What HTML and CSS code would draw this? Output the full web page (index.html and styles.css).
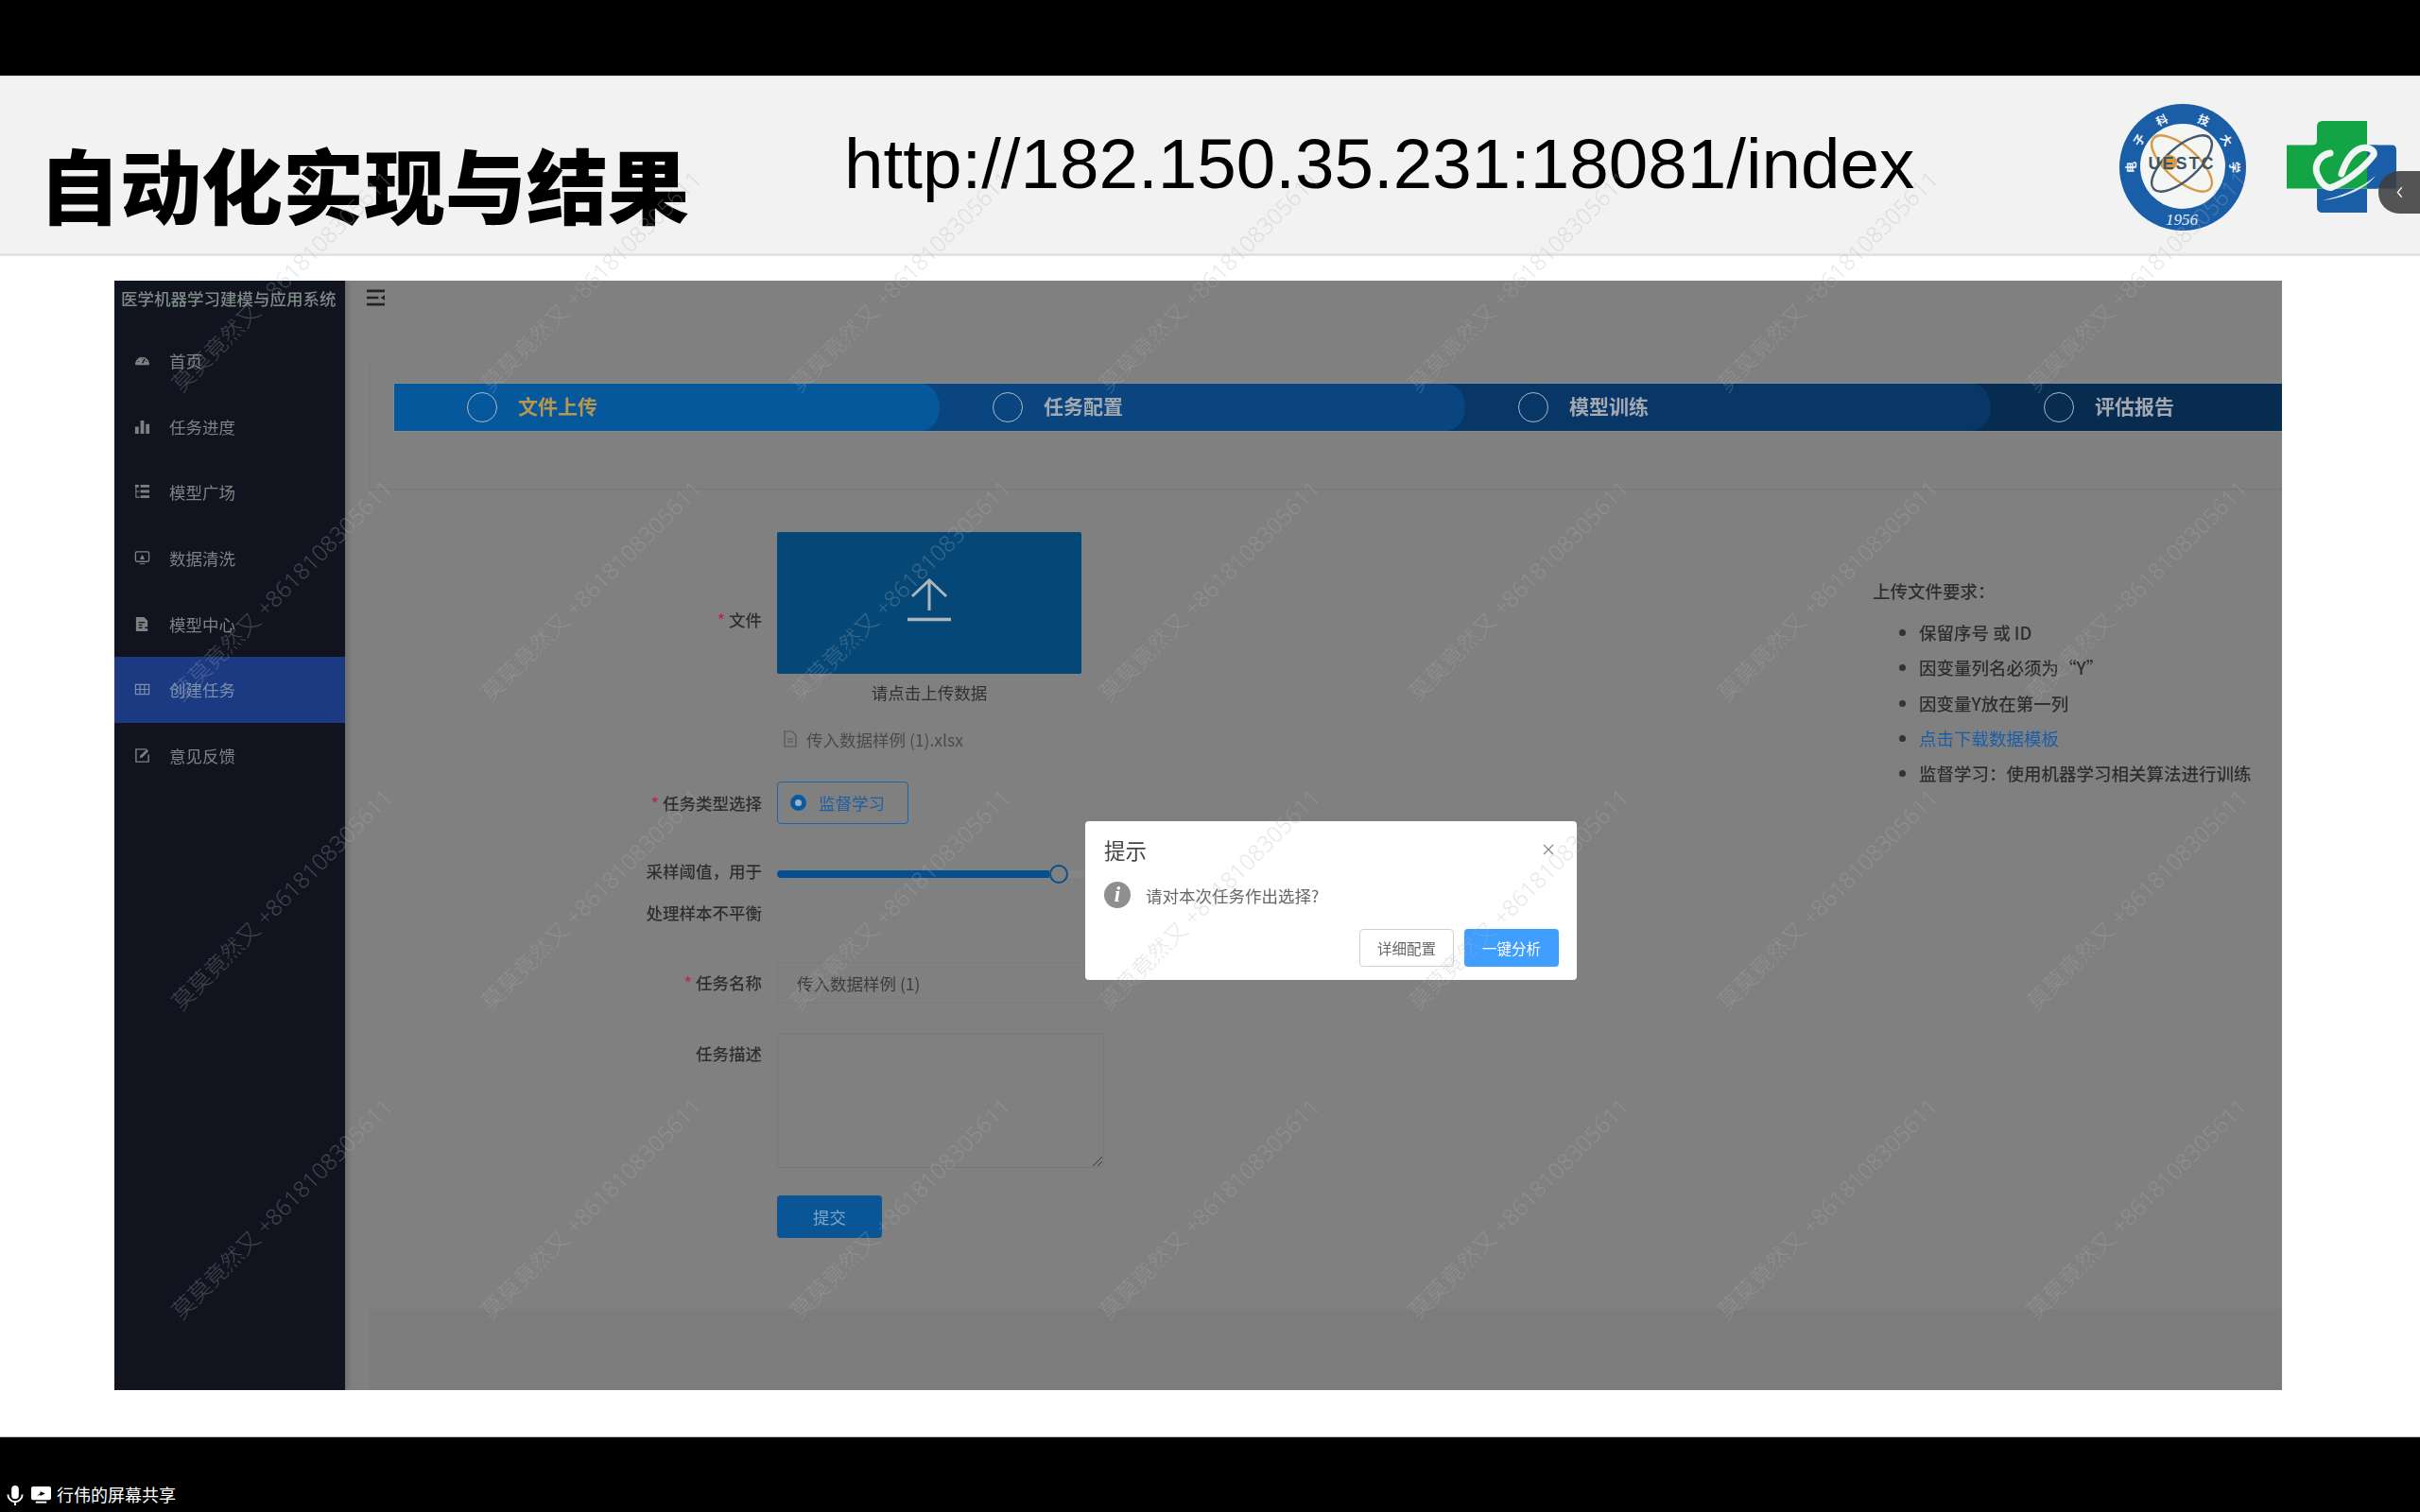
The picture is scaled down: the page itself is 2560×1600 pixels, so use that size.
FILE: index.html
```html
<!DOCTYPE html>
<html lang="zh-CN">
  <head>
    <meta charset="UTF-8" />
    <title>自动化实现与结果</title>
    <link rel="stylesheet" href="styles.css">
  </head>
  <body>
    <div class="black-bar"></div>

    <header class="slide-head">
      <h1 class="slide-title">自动化实现与结果</h1>
      <div class="slide-url">http://182.150.35.231:18081/index</div>
      <svg class="logo-seal" viewBox="0 0 136 136">
        <circle cx="68" cy="68" r="67" fill="#1a5ea8" />
        <circle cx="68" cy="67" r="45" fill="#f4f6f4" />
        <g fill="none" stroke-width="2.4">
          <ellipse cx="67" cy="64" rx="40" ry="17" transform="rotate(42 67 64)" stroke="#d99a45" />
          <ellipse cx="67" cy="64" rx="40" ry="17" transform="rotate(-42 67 64)" stroke="#46586a" />
        </g>
        <circle cx="54" cy="63" r="8" fill="#d99a45" />
        <text class="seal-name" x="67" y="69.5">UESTC</text>
        <text class="seal-year" x="67" y="129">1956</text>
        <g class="seal-ring">
          <text transform="translate(18 68) rotate(-90)">电</text>
          <text transform="translate(25.6 41.5) rotate(-58)">子</text>
          <text transform="translate(47.7 22.3) rotate(-24)">科</text>
          <text transform="translate(88.3 22.3) rotate(24)">技</text>
          <text transform="translate(110.4 41.5) rotate(58)">大</text>
          <text transform="translate(118 68) rotate(90)">学</text>
        </g>
      </svg>
      <svg class="logo-cross" viewBox="0 0 116 97">
        <path d="M85 25.6H111Q116 25.6 116 31V71.6H85V97H38Q32 97 32 91V71.6H85Z" fill="#1a5ea8" />
        <path d="M38 0H85V71.6H32V71.6H0V25.6H27Q32 25.6 32 21V6Q32 0 38 0Z" fill="#12a445" />
        <path d="M85 25.6H96V71.6H85Z" fill="#1a5ea8" />
        <path d="M46 34C34 36 28 48 33 58C37 68 44 72 48 70C60 66 80 52 92 36C94 30 84 26 76 30C68 34 62 44 58 56" fill="none" stroke="#f2f6f2" stroke-width="7" stroke-linecap="round" />
        <path d="M38 84C56 80 78 72 94 58C84 72 60 82 38 84Z" fill="#dfe9f2" />
      </svg>
      <div class="side-handle">
        <svg viewBox="0 0 12 20"><path d="M9 3L3 10L9 17" fill="none" stroke="#fff" stroke-width="1.6" /></svg>
      </div>
    </header>

    <main class="slide-body">
      <div class="app">
        <aside class="sidebar">
          <div class="brand">医学机器学习建模与应用系统</div>
          <nav class="menu">
            <a class="menu-item">
              <svg viewBox="0 0 18 18"><path d="M1 13A8 8 0 1 1 17 13Q17 14 16 14H2Q1 14 1 13Z" fill="currentColor" /><path d="M9 12L12 7M4 10H5M13 10H14M9 6V7" stroke="#11141f" stroke-width="1.4" /></svg>
              <span>首页</span>
            </a>
            <a class="menu-item">
              <svg viewBox="0 0 18 18"><path d="M1 9H5V17H1ZM7 2H11V17H7ZM13 6H17V17H13Z" fill="currentColor" /></svg>
              <span>任务进度</span>
            </a>
            <a class="menu-item">
              <svg viewBox="0 0 18 18"><path d="M1 1H5V4H1ZM7 1H17V4H7ZM7 7H17V10H7ZM7 13H17V16H7Z" fill="currentColor" /><path d="M2 4V15H6M2 8.5H6" fill="none" stroke="currentColor" stroke-width="1.2" /></svg>
              <span>模型广场</span>
            </a>
            <a class="menu-item">
              <svg viewBox="0 0 18 18"><rect x="1.5" y="2" width="15" height="11" rx="1.5" fill="none" stroke="currentColor" stroke-width="1.4" /><path d="M6 15.5H12M7 10L9 6L11 10Z" fill="currentColor" stroke="currentColor" /></svg>
              <span>数据清洗</span>
            </a>
            <a class="menu-item">
              <svg viewBox="0 0 18 18"><path d="M2 1H11L15 5V17H2Z" fill="currentColor" /><path d="M5 7H12M5 10H9M12 13H17M5 13H9" stroke="#11141f" stroke-width="1.4" /></svg>
              <span>模型中心</span>
            </a>
            <a class="menu-item active">
              <svg viewBox="0 0 18 18"><path d="M1.5 3.5H16.5V14.5H1.5ZM1.5 9H16.5M6.5 3.5V14.5M11.5 3.5V14.5" fill="none" stroke="currentColor" stroke-width="1.3" /></svg>
              <span>创建任务</span>
            </a>
            <a class="menu-item">
              <svg viewBox="0 0 18 18"><path d="M14 2H2V16H16V8" fill="none" stroke="currentColor" stroke-width="1.5" /><path d="M6 12L7 9L14 2L16 4L9 11Z" fill="currentColor" /></svg>
              <span>意见反馈</span>
            </a>
          </nav>
        </aside>

        <section class="main">
          <div class="main-top">
            <svg class="fold-icon" viewBox="0 0 20 18"><path d="M0 1.5H20M0 9H13M0 16.5H20" stroke="#222" stroke-width="2.8" /><path d="M20 6V12L15.5 9Z" fill="#222" /></svg>
          </div>

          <div class="steps-card">
            <div class="steps">
              <div class="step step-1"><i></i><span>文件上传</span></div>
              <div class="step step-2"><i></i><span>任务配置</span></div>
              <div class="step step-3"><i></i><span>模型训练</span></div>
              <div class="step step-4"><i></i><span>评估报告</span></div>
            </div>
          </div>

          <div class="content">
            <form class="task-form">
              <div class="form-row row-upload">
                <label class="required">文件</label>
                <div class="upload-wrap">
                  <div class="upload-box">
                    <svg viewBox="0 0 48 46"><path d="M24 2V34M6 19L24 2L42 19" fill="none" stroke="#aeb6bb" stroke-width="3" /><path d="M1 43.5H47" stroke="#aeb6bb" stroke-width="3.4" /></svg>
                  </div>
                  <div class="upload-tip">请点击上传数据</div>
                </div>
              </div>
              <div class="form-row row-file">
                <span></span>
                <div class="file-item">
                  <svg viewBox="0 0 14 18"><path d="M1 1H9L13 5V17H1ZM4 9H10M4 12H10" fill="none" stroke="#555" stroke-width="1.2" /></svg>
                  <span>传入数据样例 (1).xlsx</span>
                </div>
              </div>
              <div class="form-row row-radio">
                <label class="required">任务类型选择</label>
                <div class="radio-btn"><i></i><span>监督学习</span></div>
              </div>
              <div class="form-row row-slider">
                <label>采样阈值，用于<br />处理样本不平衡</label>
                <div class="slider">
                  <div class="slider-fill"></div>
                  <div class="slider-thumb"></div>
                </div>
              </div>
              <div class="form-row row-name">
                <label class="required">任务名称</label>
                <div class="text-input">传入数据样例 (1)</div>
              </div>
              <div class="form-row row-desc">
                <label>任务描述</label>
                <div class="text-area">
                  <svg viewBox="0 0 12 12"><path d="M1 11L11 1M6 11L11 6" stroke="#333" stroke-width="1" /></svg>
                </div>
              </div>
              <div class="form-row row-submit">
                <span></span>
                <button type="button" class="submit-btn">提交</button>
              </div>
            </form>

            <div class="rules">
              <p>上传文件要求：</p>
              <ul>
                <li>保留序号 或 ID</li>
                <li>因变量列名必须为“Y”</li>
                <li>因变量Y放在第一列</li>
                <li><a>点击下载数据模板</a></li>
                <li>监督学习：使用机器学习相关算法进行训练</li>
              </ul>
            </div>
          </div>
          <div class="bottom-shade"></div>
        </section>

        <div class="dialog">
          <div class="dialog-head">
            <span>提示</span>
            <svg viewBox="0 0 12 12"><path d="M1 1L11 11M11 1L1 11" stroke="#8c8c8c" stroke-width="1.4" /></svg>
          </div>
          <div class="dialog-msg">
            <i class="info-icon">i</i>
            <span>请对本次任务作出选择?</span>
          </div>
          <div class="dialog-actions">
            <button type="button" class="btn-plain">详细配置</button>
            <button type="button" class="btn-primary">一键分析</button>
          </div>
        </div>
      </div>
    </main>

    <footer class="share-bar">
      <svg class="mic-icon" viewBox="0 0 18 22"><rect x="5" y="0" width="8" height="15" rx="4" fill="#fff" /><path d="M1 10A8 8 0 0 0 17 10M9 18V22" fill="none" stroke="#fff" stroke-width="2" /></svg>
      <svg class="screen-icon" viewBox="0 0 22 22"><rect x="0" y="1" width="22" height="15" rx="2" fill="#fff" /><path d="M5 18.5H17" stroke="#fff" stroke-width="2" /><path d="M6 12L10 8.5V6.5L15.5 9L10 11.5V10Z" fill="#000" /></svg>
      <span>行伟的屏幕共享</span>
    </footer>

    <div class="watermarks">
      <span>莫莫竟然又 +8618108305611</span><span>莫莫竟然又 +8618108305611</span><span>莫莫竟然又 +8618108305611</span><span>莫莫竟然又 +8618108305611</span><span>莫莫竟然又 +8618108305611</span><span>莫莫竟然又 +8618108305611</span><span>莫莫竟然又 +8618108305611</span>
      <span>莫莫竟然又 +8618108305611</span><span>莫莫竟然又 +8618108305611</span><span>莫莫竟然又 +8618108305611</span><span>莫莫竟然又 +8618108305611</span><span>莫莫竟然又 +8618108305611</span><span>莫莫竟然又 +8618108305611</span><span>莫莫竟然又 +8618108305611</span>
      <span>莫莫竟然又 +8618108305611</span><span>莫莫竟然又 +8618108305611</span><span>莫莫竟然又 +8618108305611</span><span>莫莫竟然又 +8618108305611</span><span>莫莫竟然又 +8618108305611</span><span>莫莫竟然又 +8618108305611</span><span>莫莫竟然又 +8618108305611</span>
      <span>莫莫竟然又 +8618108305611</span><span>莫莫竟然又 +8618108305611</span><span>莫莫竟然又 +8618108305611</span><span>莫莫竟然又 +8618108305611</span><span>莫莫竟然又 +8618108305611</span><span>莫莫竟然又 +8618108305611</span><span>莫莫竟然又 +8618108305611</span>
    </div>
  </body>
</html>
```

FILE: styles.css
```css
body {
  font-family: "Liberation Sans", "Noto Sans CJK SC", sans-serif;
  margin: 0;
  width: 2560px;
  height: 1600px;
  overflow: hidden;
  position: relative;
  display: flex;
  flex-direction: column;
  background-color: #ffffff;
}

.black-bar {
  height: 80px;
  flex: none;
  background-color: #000000;
}

/* slide header */
.slide-head {
  height: 187px;
  flex: none;
  display: flex;
  align-items: flex-start;
  position: relative;
  background-color: #f2f2f2;
  border-top: 1px solid #e0e0e0;
  border-bottom: 3px solid #e3e3e3;
}

.slide-title {
  width: 852px;
  margin: 58px 0 0 41px;
  font-family: "Noto Sans CJK SC", sans-serif;
  font-size: 86px;
  line-height: 110px;
  font-weight: 900;
  color: #000000;
  white-space: nowrap;
}

.slide-url {
  width: 1348px;
  margin-top: 49px;
  font-size: 74.6px;
  line-height: 86px;
  color: #000000;
  white-space: nowrap;
}

.logo-seal {
  width: 136px;
  height: 136px;
  margin-top: 28px;
  flex: none;
}

.seal-name {
  font-family: "Liberation Sans", sans-serif;
  font-size: 18px;
  font-weight: bold;
  letter-spacing: 2px;
  fill: #3e5566;
  text-anchor: middle;
}

.seal-year {
  font-family: "Liberation Serif", serif;
  font-size: 17px;
  font-style: italic;
  fill: #e6eef6;
  text-anchor: middle;
}

.seal-ring text {
  font-family: "Noto Sans CJK SC", sans-serif;
  font-size: 12px;
  font-weight: bold;
  fill: #f2f6fa;
  text-anchor: middle;
}

.logo-cross {
  width: 116px;
  height: 97px;
  margin: 47px 0 0 42px;
  flex: none;
}

.side-handle {
  position: absolute;
  right: 0;
  top: 100px;
  width: 44px;
  height: 45px;
  display: flex;
  align-items: center;
  justify-content: center;
  background-color: rgba(62, 62, 62, 0.88);
  border-radius: 22px 0 0 22px;
}

.side-handle svg {
  width: 9px;
  height: 15px;
}

/* screenshot of the app */
.slide-body {
  flex: 1;
  padding: 26px 0 0 121px;
}

.app {
  width: 2293px;
  height: 1174px;
  display: flex;
  position: relative;
  font-family: "Noto Sans CJK SC", sans-serif;
  background-color: #808080;
  filter: blur(0.5px);
  overflow: hidden;
}

.sidebar {
  width: 244px;
  flex: none;
  background-color: #11141f;
  box-shadow: 3px 0 6px rgba(0, 0, 0, 0.18);
  position: relative;
  z-index: 2;
}

.brand {
  height: 50px;
  padding: 7px 0 0 7px;
  box-sizing: border-box;
  font-size: 17.5px;
  line-height: 24px;
  font-weight: 500;
  color: #7c8a88;
  white-space: nowrap;
}

.menu-item {
  height: 69.6px;
  display: flex;
  align-items: center;
  padding-left: 21px;
  font-size: 17.5px;
  color: #7f8082;
}

.menu-item svg {
  width: 17px;
  height: 17px;
  margin-right: 20px;
}

.menu-item.active {
  background-color: #1b3a82;
  color: #7b8eac;
}

.main {
  flex: 1;
  display: flex;
  flex-direction: column;
  min-width: 0;
}

.main-top {
  height: 83px;
  padding: 8px 0 0 23px;
  box-sizing: border-box;
}

.fold-icon {
  width: 19px;
  height: 18px;
}

.steps-card {
  height: 138px;
  margin-left: 26px;
  padding: 26px 0 0 25px;
  box-sizing: border-box;
  border-left: 1px solid #7c7c7c;
  border-bottom: 1px solid #777777;
}

.steps {
  display: flex;
  height: 50px;
  overflow: hidden;
  box-shadow: 0 0 0 1px rgba(120, 160, 180, 0.35);
}

.step {
  width: 577px;
  flex: none;
  margin-right: -21px;
  padding-left: 77px;
  box-sizing: border-box;
  display: flex;
  align-items: center;
  position: relative;
  border-radius: 0 20px 20px 0 / 0 50% 50% 0;
  font-size: 21px;
  font-weight: bold;
  color: #a3a9b0;
}

.step span {
  padding-bottom: 4px;
}

.step i {
  width: 32px;
  height: 32px;
  box-sizing: border-box;
  margin-right: 22px;
  border: 1.5px solid #a9b8c4;
  border-radius: 50%;
}

.step-1 {
  background-color: #05589c;
  color: #b7964f;
  z-index: 4;
}

.step-2 {
  background-color: #0a457f;
  z-index: 3;
}

.step-3 {
  background-color: #083667;
  z-index: 2;
}

.step-4 {
  width: 400px;
  background-color: #072c50;
  z-index: 1;
}

.content {
  flex: 1;
  display: flex;
  min-height: 0;
}

.task-form {
  width: 1616px;
  flex: none;
  padding-top: 45px;
  box-sizing: border-box;
}

.form-row {
  display: grid;
  grid-template-columns: 441px auto;
  column-gap: 16px;
  align-items: center;
  justify-content: start;
}

.form-row label {
  text-align: right;
  font-size: 17.5px;
  line-height: 44px;
  font-weight: 500;
  color: #2e2e2e;
}

.required::before {
  content: "* ";
  color: #b03048;
}

.upload-box {
  width: 322px;
  height: 150px;
  display: flex;
  align-items: center;
  justify-content: center;
  background-color: #054878;
  border-radius: 2px;
}

.upload-box svg {
  width: 48px;
  height: 46px;
  margin-top: -6px;
}

.upload-tip {
  height: 36px;
  line-height: 40px;
  text-align: center;
  font-size: 17.5px;
  color: #303030;
}

.row-file {
  margin-top: 13px;
}

.file-item {
  height: 40px;
  display: flex;
  align-items: center;
  padding-left: 7px;
  font-size: 17.5px;
  color: #4a4a4a;
}

.file-item svg {
  width: 14px;
  height: 18px;
  margin-right: 10px;
}

.row-radio {
  margin-top: 25px;
}

.radio-btn {
  width: 139px;
  height: 45px;
  box-sizing: border-box;
  display: flex;
  align-items: center;
  padding-left: 13px;
  border: 1.5px solid #1a66a8;
  border-radius: 4px;
  font-size: 17.5px;
  color: #1e5fa2;
}

.radio-btn i {
  width: 17px;
  height: 17px;
  box-sizing: border-box;
  margin-right: 13px;
  border: 5.5px solid #0a5aa0;
  border-radius: 50%;
  background-color: #9fb2c4;
}

.row-slider {
  margin-top: 28px;
  align-items: start;
}

.slider {
  width: 343px;
  height: 44px;
  margin-top: 3px;
  display: flex;
  align-items: center;
  background: linear-gradient(#858585, #858585) center / 100% 8px no-repeat;
}

.slider-fill {
  width: 288px;
  height: 8px;
  background-color: #054f8f;
  border-radius: 4px 0 0 4px;
}

.slider-thumb {
  width: 20px;
  height: 20px;
  box-sizing: border-box;
  flex: none;
  border: 2.5px solid #054f8f;
  border-radius: 50%;
  background-color: #808080;
}

.row-name {
  margin-top: 30px;
}

.text-input {
  width: 346px;
  height: 44px;
  box-sizing: border-box;
  padding-left: 20px;
  line-height: 44px;
  border: 1px solid #7a7a7a;
  border-radius: 4px;
  font-size: 17.5px;
  color: #3c3c3c;
}

.row-desc {
  margin-top: 31px;
  align-items: start;
}

.text-area {
  width: 346px;
  height: 143px;
  box-sizing: border-box;
  display: flex;
  align-items: flex-end;
  justify-content: flex-end;
  border: 1px solid #777777;
  border-radius: 4px;
}

.text-area svg {
  width: 12px;
  height: 12px;
}

.row-submit {
  margin-top: 29px;
}

.submit-btn {
  width: 111px;
  height: 45px;
  border: none;
  border-radius: 4px;
  background-color: #0a5596;
  font-family: inherit;
  font-size: 17.5px;
  color: #7ca6cc;
}

.rules {
  flex: 1;
  padding-top: 89px;
  font-size: 18.5px;
  line-height: 37.2px;
  font-weight: 500;
  color: #2e2e2e;
  white-space: nowrap;
}

.rules p {
  margin: 0;
}

.rules ul {
  margin: 7px 0 0 0;
  padding-left: 49px;
}

.rules li::marker {
  color: #333333;
}

.rules a {
  font-weight: normal;
  color: #1a5ea8;
}

.bottom-shade {
  height: 86px;
  margin-left: 26px;
  background-color: #7c7c7c;
}

/* message box above the dimmed page */
.dialog {
  position: absolute;
  left: 1027px;
  top: 572px;
  z-index: 5;
  width: 520px;
  height: 168px;
  box-sizing: border-box;
  padding: 15px 19px 0 20px;
  background-color: #ffffff;
  border-radius: 4px;
}

.dialog-head {
  display: flex;
  justify-content: space-between;
  align-items: center;
  height: 30px;
  padding-right: 5px;
  font-size: 22.5px;
  color: #444444;
}

.dialog-head svg {
  width: 12px;
  height: 12px;
}

.dialog-msg {
  display: flex;
  align-items: center;
  margin-top: 19px;
  font-size: 17.5px;
  color: #666666;
}

.info-icon {
  width: 28px;
  height: 28px;
  margin-right: 16px;
  border-radius: 50%;
  background-color: #8f8f8f;
  color: #ffffff;
  font-family: "Liberation Serif", serif;
  font-size: 23px;
  font-weight: bold;
  line-height: 28px;
  text-align: center;
}

.dialog-actions {
  display: flex;
  justify-content: flex-end;
  gap: 11px;
  margin-top: 22px;
}

.dialog-actions button {
  height: 40px;
  border-radius: 4px;
  font-family: inherit;
  font-size: 15.5px;
}

.btn-plain {
  width: 100px;
  border: 1px solid #d0d0d0;
  background-color: #ffffff;
  color: #666666;
}

.btn-primary {
  width: 100px;
  border: none;
  background-color: #409eff;
  color: #ffffff;
}

/* meeting bar */
.share-bar {
  height: 80px;
  flex: none;
  display: flex;
  align-items: flex-end;
  padding: 0 0 7px 7px;
  box-sizing: border-box;
  background-color: #000000;
  border-top: 1px solid #bdbdbd;
  font-family: "Noto Sans CJK SC", sans-serif;
  font-size: 18px;
  line-height: 24px;
  color: #ffffff;
}

.mic-icon {
  width: 18px;
  height: 21px;
  margin-right: 8px;
}

.screen-icon {
  width: 21px;
  height: 21px;
  margin-right: 6px;
}

/* meeting watermark over the whole slide */
.watermarks {
  position: absolute;
  left: 134px;
  top: 133px;
  display: grid;
  grid-template-columns: repeat(7, 327px);
  grid-auto-rows: 327px;
  place-items: center;
  pointer-events: none;
  z-index: 9;
}

.watermarks span {
  transform: rotate(-45deg);
  font-family: "Noto Sans", "Noto Sans CJK SC", sans-serif;
  font-size: 24px;
  font-weight: 300;
  color: rgba(170, 176, 188, 0.32);
  white-space: nowrap;
}
```
